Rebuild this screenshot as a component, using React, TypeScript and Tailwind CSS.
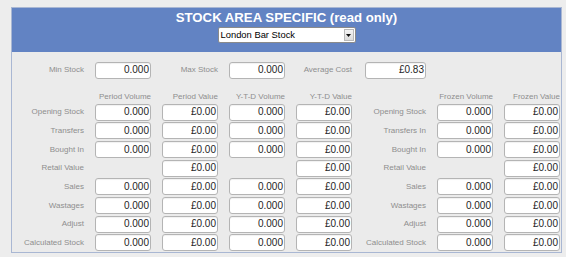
import React from "react";

const FONT = { fontFamily: '"Liberation Sans", Arial, sans-serif' };

function Box({ v, className = "" }: { v: string; className?: string }) {
  return (
    <div
      className={
        "h-[17px] bg-white border border-[#b4b4b4] rounded-[3px] flex items-center justify-end pr-[1px] text-[10px] leading-none text-[#1e1e1e] shadow-[inset_0_1px_1px_rgba(0,0,0,0.06)] " +
        className
      }
    >
      {v}
    </div>
  );
}

function Label({ t, className = "" }: { t: string; className?: string }) {
  return (
    <div className={"h-[17px] flex items-center justify-end text-[8px] leading-none text-[#8e8e8e] whitespace-nowrap " + className}>
      {t}
    </div>
  );
}

const Empty = () => <div className="h-[17px]" />;

type Row = {
  l: string;
  r: string;
  pv: string | null;
  pval: string;
  yv: string | null;
  yval: string;
  fv: string | null;
  fval: string;
};

const rows: Row[] = [
  { l: "Opening Stock", r: "Opening Stock", pv: "0.000", pval: "£0.00", yv: "0.000", yval: "£0.00", fv: "0.000", fval: "£0.00" },
  { l: "Transfers", r: "Transfers In", pv: "0.000", pval: "£0.00", yv: "0.000", yval: "£0.00", fv: "0.000", fval: "£0.00" },
  { l: "Bought In", r: "Bought In", pv: "0.000", pval: "£0.00", yv: "0.000", yval: "£0.00", fv: "0.000", fval: "£0.00" },
  { l: "Retail Value", r: "Retail Value", pv: null, pval: "£0.00", yv: null, yval: "£0.00", fv: null, fval: "£0.00" },
  { l: "Sales", r: "Sales", pv: "0.000", pval: "£0.00", yv: "0.000", yval: "£0.00", fv: "0.000", fval: "£0.00" },
  { l: "Wastages", r: "Wastages", pv: "0.000", pval: "£0.00", yv: "0.000", yval: "£0.00", fv: "0.000", fval: "£0.00" },
  { l: "Adjust", r: "Adjust", pv: "0.000", pval: "£0.00", yv: "0.000", yval: "£0.00", fv: "0.000", fval: "£0.00" },
  { l: "Calculated Stock", r: "Calculated Stock", pv: "0.000", pval: "£0.00", yv: "0.000", yval: "£0.00", fv: "0.000", fval: "£0.00" },
];

const COLS = "grid grid-cols-[72px_56px_56px_56px_56px_63px_56px_56px] gap-x-[11px]";

export default function App() {
  return (
    <div className="min-h-screen w-[566px] bg-[#ededed] pt-[7px] overflow-hidden" style={FONT}>
      <div className="ml-[11px] w-[551px] border border-[#a9b7d3] bg-[#ebebeb] pb-[1px]">
        {/* header */}
        <div className="bg-[#6283c3] flex flex-col items-center pt-[1.5px] pb-[8.5px]">
          <div className="text-white font-bold text-[13.2px] leading-[15px] whitespace-nowrap">
            STOCK AREA SPECIFIC (read only)
          </div>
          <div className="mt-[2.6px] w-[138px] h-[16px] bg-white border border-[#8a8a8a] rounded-[2px] flex items-center">
            <span className="flex-1 pl-[2px] text-[9.4px] leading-none text-black">London Bar Stock</span>
            <span className="w-[10px] h-[12px] mr-[1px] border border-[#b9b9b9] bg-gradient-to-b from-[#f4f4f4] to-[#dcdcdc] flex items-center justify-center">
              <svg width="5" height="3" viewBox="0 0 5 3">
                <path d="M0 0H5L2.5 3Z" fill="#111" />
              </svg>
            </span>
          </div>
        </div>

        {/* top row */}
        <div className={COLS + " mt-[10px]"}>
          <Label t="Min Stock" />
          <Box v="0.000" />
          <Label t="Max Stock" />
          <Box v="0.000" />
          <Label t="Average Cost" />
          <Box v="£0.83" className="ml-[2px]" />
          <Empty />
          <Empty />
        </div>

        {/* table */}
        <div className={COLS + " gap-y-[1.67px] mt-[13.5px]"}>
          <div />
          <div className="h-[10px] text-[8px] leading-[10px] text-[#8e8e8e] text-right whitespace-nowrap">Period Volume</div>
          <div className="h-[10px] text-[8px] leading-[10px] text-[#8e8e8e] text-right whitespace-nowrap">Period Value</div>
          <div className="h-[10px] text-[8px] leading-[10px] text-[#8e8e8e] text-right whitespace-nowrap">Y-T-D Volume</div>
          <div className="h-[10px] text-[8px] leading-[10px] text-[#8e8e8e] text-right whitespace-nowrap">Y-T-D Value</div>
          <div />
          <div className="h-[10px] text-[8px] leading-[10px] text-[#8e8e8e] text-right whitespace-nowrap">Frozen Volume</div>
          <div className="h-[10px] text-[8px] leading-[10px] text-[#8e8e8e] text-right whitespace-nowrap">Frozen Value</div>
          {rows.map((r, i) => (
            <React.Fragment key={i}>
              <Label t={r.l} />
              {r.pv ? <Box v={r.pv} /> : <Empty />}
              <Box v={r.pval} />
              {r.yv ? <Box v={r.yv} /> : <Empty />}
              <Box v={r.yval} />
              <Label t={r.r} />
              {r.fv ? <Box v={r.fv} /> : <Empty />}
              <Box v={r.fval} />
            </React.Fragment>
          ))}
        </div>
      </div>
    </div>
  );
}
